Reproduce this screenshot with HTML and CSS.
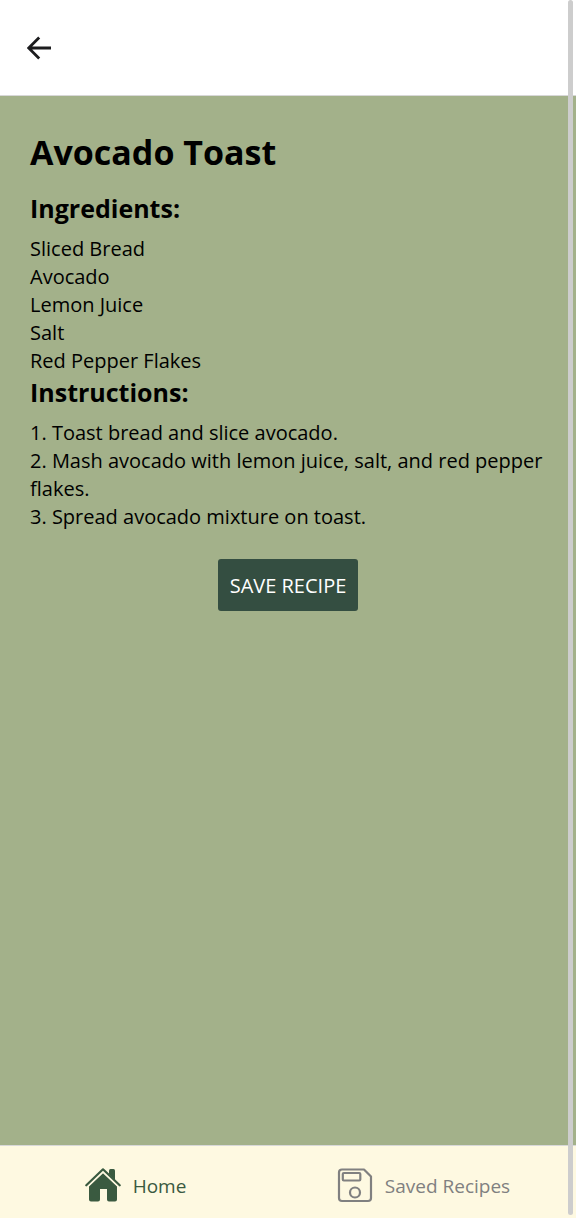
FILE: index.html
```html
<!DOCTYPE html>
<html lang="en">
<head>
  <meta charset="utf-8">
  <meta name="viewport" content="width=device-width, initial-scale=1">
  <title>Avocado Toast</title>
  <link rel="stylesheet" href="styles.css">
</head>
<body>
  <div class="app">
    <header class="header">
      <button class="back" type="button" aria-label="Back">
        <svg class="back-icon" viewBox="0 0 24 24" aria-hidden="true">
          <path d="M12.200 1.500 1.700 12l10.500 10.500M2 12h22" fill="none" stroke="currentColor" stroke-width="2.800"/>
        </svg>
      </button>
    </header>
    <main class="recipe">
      <h1 class="title">Avocado Toast</h1>
      <h2 class="subtitle">Ingredients:</h2>
      <ul class="lines">
        <li>Sliced Bread</li>
        <li>Avocado</li>
        <li>Lemon Juice</li>
        <li>Salt</li>
        <li>Red Pepper Flakes</li>
      </ul>
      <h2 class="subtitle">Instructions:</h2>
      <ul class="lines">
        <li>1. Toast bread and slice avocado.</li>
        <li>2. Mash avocado with lemon juice, salt, and red pepper flakes.</li>
        <li>3. Spread avocado mixture on toast.</li>
      </ul>
      <button class="save" type="button">SAVE RECIPE</button>
    </main>
    <nav class="tabs">
      <a class="tab tab-active" href="#home">
        <svg class="tab-icon" viewBox="0 1 36 36" aria-hidden="true">
          <path fill="currentColor" d="M18 6.300 32 19.500V32.500Q32 34.500 30 34.500H24Q22 34.500 22 32.500V22H15V32.500Q15 34.500 13 34.500H6Q4 34.500 4 32.500V19.500Z"/>
          <path fill="currentColor" d="M24 7V3.500Q24 2 25.500 2H28.500Q30 2 30 3.500V13Z"/>
          <path fill="none" stroke="#fef9e1" stroke-width="1.500" d="M2.500 19.500 18 4.700 33.500 19.500"/>
          <path fill="none" stroke="currentColor" stroke-width="2.200" stroke-linecap="round" stroke-linejoin="round" d="M1.300 18.300 18 2.300 34.700 18.300"/>
        </svg>
        <span>Home</span>
      </a>
      <a class="tab" href="#saved">
        <svg class="tab-icon" viewBox="0 1 36 36" fill="none" stroke="currentColor" stroke-width="2.200" stroke-linejoin="round" aria-hidden="true">
          <path d="M5 2.500H27L34 9.500V31Q34 34 31 34H5Q2 34 2 31V5.500Q2 2.500 5 2.500Z"/>
          <rect x="5.800" y="6" width="17.500" height="7.500" rx="1"/>
          <circle cx="18" cy="25.500" r="5"/>
        </svg>
        <span>Saved Recipes</span>
      </a>
    </nav>
  </div>
  <div class="scrollbar" aria-hidden="true"></div>
</body>
</html>
```
FILE: styles.css
```css
* {
  box-sizing: border-box;
}

body {
  margin: 0;
  font-family: "Segoe UI", "Open Sans", "Noto Sans", sans-serif;
  font-size: 20px;
  line-height: 28px;
  color: #000;
}

.app {
  display: flex;
  flex-direction: column;
  min-height: 100vh;
}

.header {
  display: flex;
  align-items: center;
  height: 96px;
  padding: 1px 27px 0;
  background: #fff;
  border-bottom: 1px solid #d8d8d8;
}

.back {
  display: flex;
  padding: 0;
  border: 0;
  background: none;
  color: #1c1c1e;
  cursor: pointer;
}

.back-icon {
  width: 24px;
  height: 24px;
}

.recipe {
  flex: 1;
  display: flex;
  flex-direction: column;
  padding: 31px 30px;
  background: #a3b18a;
}

.title {
  margin: 0 0 14px;
  font-size: 34px;
  line-height: 50px;
}

.subtitle {
  margin: 0 0 10px;
  font-size: 25px;
  line-height: 34px;
}

.lines {
  margin: 0;
  padding: 0;
  list-style: none;
}

.save {
  align-self: center;
  margin-top: 28px;
  padding: 13px 12px 11px;
  border: 0;
  border-radius: 3px;
  background: #344e41;
  color: #fff;
  font: inherit;
  cursor: pointer;
}

.tabs {
  display: flex;
  height: 73px;
  background: #fef9e1;
  border-top: 1px solid #d8d8d8;
}

.tab {
  flex: 1;
  display: flex;
  align-items: center;
  justify-content: center;
  gap: 12px;
  padding: 8px 17px 0 0;
  color: #808080;
  font-size: 19px;
  text-decoration: none;
}

.tab-active {
  color: #3a5a40;
}

.tab-icon {
  width: 36px;
  height: 36px;
}

.scrollbar {
  position: fixed;
  top: 0;
  right: 3px;
  bottom: 3px;
  width: 5px;
  border-radius: 3px;
  background: #cdcdcd;
}
```
